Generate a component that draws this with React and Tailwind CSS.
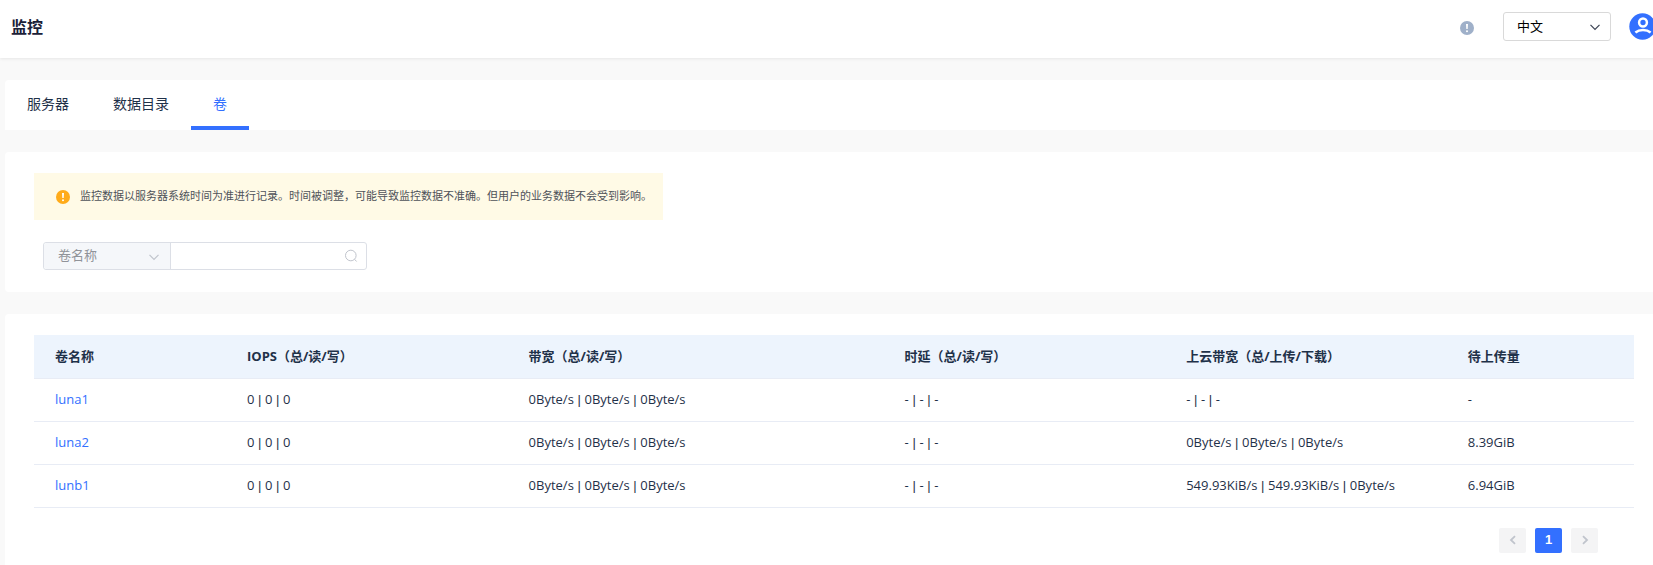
import { Fragment, useState } from 'react';

const TABS = ['服务器', '数据目录', '卷'];

const COLUMNS = [
  { title: '卷名称', width: 'w-[12%]' },
  { title: 'IOPS（总/读/写）', width: 'w-[17.6%]' },
  { title: '带宽（总/读/写）', width: 'w-[23.5%]' },
  { title: '时延（总/读/写）', width: 'w-[17.6%]' },
  { title: '上云带宽（总/上传/下载）', width: 'w-[17.6%]' },
  { title: '待上传量', width: 'w-[11.7%]' },
];

const VOLUMES = [
  {
    name: 'luna1',
    iops: ['0', '0', '0'],
    bandwidth: ['0Byte/s', '0Byte/s', '0Byte/s'],
    latency: ['-', '-', '-'],
    cloud: ['-', '-', '-'],
    pending: '-',
  },
  {
    name: 'luna2',
    iops: ['0', '0', '0'],
    bandwidth: ['0Byte/s', '0Byte/s', '0Byte/s'],
    latency: ['-', '-', '-'],
    cloud: ['0Byte/s', '0Byte/s', '0Byte/s'],
    pending: '8.39GiB',
  },
  {
    name: 'lunb1',
    iops: ['0', '0', '0'],
    bandwidth: ['0Byte/s', '0Byte/s', '0Byte/s'],
    latency: ['-', '-', '-'],
    cloud: ['549.93KiB/s', '549.93KiB/s', '0Byte/s'],
    pending: '6.94GiB',
  },
];

const InfoIcon = ({ className }) => (
  <svg viewBox="0 0 14 14" className={className} aria-hidden="true">
    <circle cx="7" cy="7" r="7" fill="currentColor" />
    <path d="M6 3h2l-.3 5H6.3z" fill="#fff" />
    <circle cx="7" cy="10.2" r="1" fill="#fff" />
  </svg>
);

const Chevron = ({ className }) => (
  <svg viewBox="0 0 12 12" fill="none" stroke="currentColor" strokeWidth="1.2" className={className} aria-hidden="true">
    <path d="M1.5 3.8 6 8.3l4.5-4.5" />
  </svg>
);

// values split by a narrow bar
const Parts = ({ values }) => values.map((value, i) => (
  <Fragment key={i}>
    {i > 0 && <span className="font-['Liberation_Sans',sans-serif]"> | </span>}
    {value}
  </Fragment>
));

const Header = () => (
  <header className="relative h-[58px] bg-white pt-3 pl-[11px] pr-[7px] shadow-[0_1px_3px_rgba(0,0,0,0.08)]">
    <div className="flex h-[29px] items-center">
      <h1 className="text-base font-bold text-[#1a2138]">监控</h1>
      <button type="button" aria-label="提示" className="ml-auto mt-0.5 text-[#9fb0c9]">
        <InfoIcon className="size-3.5" />
      </button>
      <div className="relative ml-[29px] w-[108px]">
        <select
          aria-label="语言"
          className="h-[29px] w-full appearance-none rounded-[3px] border border-[#d9d9d9] bg-white pl-[13px] text-[13px] text-black"
        >
          <option>中文</option>
          <option>English</option>
        </select>
        <Chevron className="pointer-events-none absolute top-[9px] right-2.5 size-3 text-[#3c4353]" />
      </div>
      <button type="button" aria-label="用户" className="ml-[18px]">
        <svg viewBox="0 0 27 27" className="size-[27px]" fill="none" aria-hidden="true">
          <circle cx="13.5" cy="13.5" r="13.2" fill="#3370ff" />
          <circle cx="14" cy="9.5" r="3.9" stroke="#fff" strokeWidth="2.5" />
          <path d="M6.4 19.4c4-3.200 11.200-3.200 15.200 0" stroke="#fff" strokeWidth="2.600" />
        </svg>
      </button>
    </div>
  </header>
);

const VolumeTable = () => (
  <table className="w-full table-fixed text-left text-[13px] text-[#1f3149]">
    <thead className="bg-[#edf4fd]">
      <tr className="h-[43px] border-b border-[#e8ecf5]">
        {COLUMNS.map(col => (
          <th key={col.title} className={`${col.width} pl-[21px] font-bold whitespace-nowrap`}>{col.title}</th>
        ))}
      </tr>
    </thead>
    <tbody>
      {VOLUMES.map(vol => (
        <tr key={vol.name} className="h-[43px] border-b border-[#e8ecf5] whitespace-nowrap">
          <td className="pl-[21px]">
            <a href={`#${vol.name}`} className="text-[#3370ff]">{vol.name}</a>
          </td>
          <td className="pl-[21px]"><Parts values={vol.iops} /></td>
          <td className="pl-[21px]"><Parts values={vol.bandwidth} /></td>
          <td className="pl-[21px]"><Parts values={vol.latency} /></td>
          <td className="pl-[21px]"><Parts values={vol.cloud} /></td>
          <td className="pl-[21px]">{vol.pending}</td>
        </tr>
      ))}
    </tbody>
  </table>
);

const App = () => {
  const [tab, setTab] = useState('卷');
  const [keyword, setKeyword] = useState('');

  return (
    <div className="min-h-screen overflow-hidden bg-[#f9f9f9] font-['Open_Sans','Noto_Sans_CJK_SC',sans-serif]">
      {/* the page is slightly wider than the window */}
      <div className="-mr-2.5 flex min-h-screen flex-col">
        <Header />

        <main className="flex grow flex-col gap-[22px] pt-[22px] pl-[5px]">
          <nav className="flex h-[50px] rounded-t-[4px] bg-white">
            {TABS.map(name => (
              <button
                key={name}
                type="button"
                onClick={() => setTab(name)}
                className={`border-b-4 px-[22px] pt-0.5 text-sm ${tab === name ? 'border-[#3370ff] text-[#3370ff]' : 'border-transparent text-[#1f3149]'}`}
              >
                {name}
              </button>
            ))}
          </nav>

          <section className="rounded-[4px] bg-white px-[29px] pt-[21px] pb-[22px]">
            <p className="flex h-[47px] w-[629px] items-center bg-[#fffae6] pl-[22px] text-[11px] whitespace-nowrap text-[#4e5259]">
              <InfoIcon className="mr-2.5 size-3.5 text-[#ffab1a]" />
              监控数据以服务器系统时间为准进行记录。时间被调整，可能导致监控数据不准确。但用户的业务数据不会受到影响。
            </p>
            <div className="mt-[22px] ml-[9px] flex h-7 w-[324px] rounded-[3px] border border-[#dcdfe6] text-[13px]">
              <div className="relative w-[127px] shrink-0 border-r border-[#dcdfe6]">
                <select
                  aria-label="搜索字段"
                  className="h-full w-full appearance-none rounded-l-[3px] bg-[#f5f7fa] pl-3.5 text-[#909399]"
                >
                  <option>卷名称</option>
                </select>
                <Chevron className="pointer-events-none absolute top-2 right-2.5 size-3 text-[#c0c4cc]" />
              </div>
              <input
                type="text"
                aria-label="搜索"
                value={keyword}
                onChange={e => setKeyword(e.target.value)}
                className="min-w-0 grow pl-3 outline-none"
              />
              <button type="button" aria-label="查询" className="px-2 text-[#c0c4cc]">
                <svg viewBox="0 0 14 14" fill="none" stroke="currentColor" className="size-3.5" aria-hidden="true">
                  <circle cx="6.8" cy="6.5" r="5.300" />
                  <path d="m10.600 10.300 2 2.200" />
                </svg>
              </button>
            </div>
          </section>

          <section className="grow rounded-t-[4px] bg-white px-[29px] pt-[21px] pb-3">
            <VolumeTable />
            <div className="mt-5 mr-9 flex justify-end gap-[9px] text-[13px]">
              <button type="button" aria-label="上一页" disabled className="flex h-[25px] w-[27px] items-center justify-center rounded-[2px] bg-[#f4f4f5] text-[#c0c4cc]">
                <svg viewBox="0 0 12 12" fill="none" stroke="currentColor" strokeWidth="1.800" className="size-3" aria-hidden="true">
                  <path d="M8 2.200 4 6l4 3.800" />
                </svg>
              </button>
              <button type="button" className="h-[25px] w-[27px] rounded-[2px] bg-[#3370ff] font-['Liberation_Sans',sans-serif] font-bold text-white">1</button>
              <button type="button" aria-label="下一页" disabled className="flex h-[25px] w-[27px] items-center justify-center rounded-[2px] bg-[#f4f4f5] text-[#c0c4cc]">
                <svg viewBox="0 0 12 12" fill="none" stroke="currentColor" strokeWidth="1.800" className="size-3" aria-hidden="true">
                  <path d="m4 2.200 4 3.800-4 3.800" />
                </svg>
              </button>
            </div>
          </section>
        </main>
      </div>
    </div>
  );
};

export default App;
